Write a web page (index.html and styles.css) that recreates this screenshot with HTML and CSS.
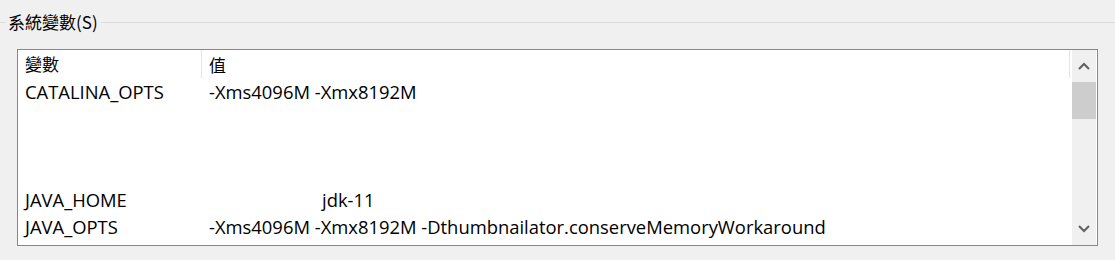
FILE: index.html
```html
<!DOCTYPE html>
<html lang="zh-Hant">

<head>
  <meta charset="UTF-8">
  <meta name="viewport" content="width=device-width, initial-scale=1.0">
  <title>系統變數</title>
  <link rel="stylesheet" href="styles.css">
</head>

<body>
  <div class="group">
    <div class="group-title">
      <span class="group-line group-line-start"></span>
      <span class="group-label">系統變數(S)</span>
      <span class="group-line"></span>
    </div>

    <div class="listbox">
      <div class="list">
        <div class="list-header">
          <div class="col-name">變數</div>
          <div class="col-value">值</div>
        </div>
        <div class="list-row">
          <div class="col-name">CATALINA_OPTS</div>
          <div class="col-value">-Xms4096M -Xmx8192M</div>
        </div>
        <div class="list-row"></div>
        <div class="list-row"></div>
        <div class="list-row"></div>
        <div class="list-row">
          <div class="col-name">JAVA_HOME</div>
          <div class="col-value"><span class="value-indent">jdk-11</span></div>
        </div>
        <div class="list-row">
          <div class="col-name">JAVA_OPTS</div>
          <div class="col-value">-Xms4096M -Xmx8192M -Dthumbnailator.conserveMemoryWorkaround</div>
        </div>
      </div>

      <div class="scrollbar">
        <div class="scroll-btn">
          <svg width="12" height="8" viewBox="0 0 12 8"><path d="M1 7 L6 2 L11 7" fill="none" stroke="#606060" stroke-width="2"/></svg>
        </div>
        <div class="scroll-track">
          <div class="scroll-thumb"></div>
        </div>
        <div class="scroll-btn">
          <svg width="12" height="8" viewBox="0 0 12 8"><path d="M1 1 L6 6 L11 1" fill="none" stroke="#606060" stroke-width="2"/></svg>
        </div>
      </div>
    </div>
  </div>
</body>

</html>
```

FILE: styles.css
```css
body {
  margin: 0;
  background-color: #f0f0f0;
  font-family: "Open Sans", "Noto Sans CJK TC", sans-serif;
  font-size: 18.4px;
  color: #000;
}

.group {
  padding-top: 10px;
}

.group-title {
  display: flex;
  align-items: center;
  height: 24px;
}

.group-line {
  flex: 1;
  height: 1px;
  background-color: #dcdcdc;
}

.group-line-start {
  flex: 0 0 6px;
}

.group-label {
  padding: 0 3px 0 2px;
  font-family: "Noto Sans CJK TC", sans-serif;
  font-size: 17px;
  line-height: 24px;
}

.listbox {
  display: flex;
  width: 1081px;
  height: 197px;
  margin: 15px 0 0 17px;
  box-sizing: border-box;
  border: 1px solid #828790;
  background-color: #fff;
}

.list {
  flex: 1;
  overflow: hidden;
}

.list-header {
  display: flex;
  height: 28px;
  align-items: center;
  margin-right: 2px;
  border-right: 1px solid #e5e5e5;
  box-sizing: border-box;
  font-family: "Noto Sans CJK TC", sans-serif;
  font-size: 17px;
}

.list-header .col-name {
  height: 28px;
  line-height: 28px;
  border-right: 1px solid #e5e5e5;
}

.list-row {
  display: flex;
  height: 27px;
  align-items: center;
  white-space: nowrap;
}

.col-name {
  flex: 0 0 184px;
  box-sizing: border-box;
  padding-left: 7px;
}

.col-value {
  padding-left: 7px;
}

.value-indent {
  padding-left: 113px;
}

.scrollbar {
  display: flex;
  flex-direction: column;
  width: 24px;
  margin-right: 1px;
  background-color: #f0f0f0;
}

.scroll-btn {
  display: flex;
  align-items: center;
  justify-content: center;
  height: 32px;
}

.scroll-track {
  flex: 1;
}

.scroll-thumb {
  height: 37px;
  background-color: #cdcdcd;
}
```
